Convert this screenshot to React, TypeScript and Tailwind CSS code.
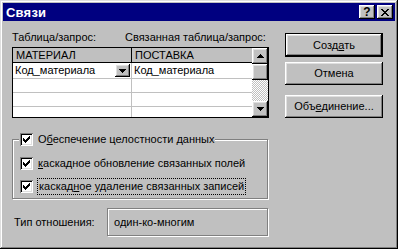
import React from "react";

const raised =
  "shadow-[inset_-1px_-1px_#000,inset_1px_1px_#fff,inset_-2px_-2px_#808080,inset_2px_2px_#dfdfdf]";
const sunken =
  "shadow-[inset_1px_1px_#808080,inset_-1px_-1px_#fff,inset_2px_2px_#000,inset_-2px_-2px_#dfdfdf]";
const etched = "border border-[#808080] shadow-[1px_1px_0_#fff,inset_1px_1px_0_#fff]";

function Arrow({ up }: { up?: boolean }) {
  return (
    <svg width="7" height="4" viewBox="0 0 7 4" shapeRendering="crispEdges" className={up ? "rotate-180" : ""}>
      <path d="M0 0h7v1h-7zM1 1h5v1h-5zM2 2h3v1h-3zM3 3h1v1h-1z" fill="#000" />
    </svg>
  );
}

function Check() {
  return (
    <span className={`flex h-[13px] w-[13px] shrink-0 items-center justify-center bg-white ${sunken}`}>
      <svg width="7" height="7" viewBox="0 0 7 7" shapeRendering="crispEdges">
        <path
          d="M6 0h1v1h-1zM5 1h2v1h-2zM0 2h1v1h-1zM4 2h3v1h-3zM0 3h2v1h-2zM3 3h3v1h-3zM0 4h5v1h-5zM1 5h3v1h-3zM2 6h1v1h-1z"
          fill="#000"
        />
      </svg>
    </span>
  );
}

function Button({ children, isDefault }: { children: React.ReactNode; isDefault?: boolean }) {
  const face = (
    <div className={`flex h-full w-full items-center justify-center bg-[#c0c0c0] ${raised}`}>{children}</div>
  );
  return isDefault ? <div className="h-[24px] border border-black">{face}</div> : <div className="h-[23px]">{face}</div>;
}

const rows = ["Код_материала", "", "", ""];

export default function App() {
  return (
    <div className="h-[249px] w-[398px] bg-[#c0c0c0] p-[3px] font-['Liberation_Sans',Arial,sans-serif] text-[11px] leading-[13px] text-black shadow-[inset_-1px_-1px_#000,inset_1px_1px_#dfdfdf,inset_-2px_-2px_#808080,inset_2px_2px_#fff]">
      {/* title bar */}
      <div className="flex h-[18px] items-center justify-between bg-[#000080] pl-[3px] pr-[2px]">
        <span className="text-[13px] font-bold tracking-[0.2px] text-white">Связи</span>
        <div className="flex gap-[2px]">
          <div className={`flex h-[14px] w-[16px] items-center justify-center bg-[#c0c0c0] ${raised}`}>
            <span className="text-[12px] leading-none font-bold">?</span>
          </div>
          <div className={`flex h-[14px] w-[16px] items-center justify-center bg-[#c0c0c0] ${raised}`}>
            <svg width="8" height="7" viewBox="0 0 8 7" shapeRendering="crispEdges">
              <path
                d="M0 0h2v1h-2zM6 0h2v1h-2zM1 1h2v1h-2zM5 1h2v1h-2zM2 2h4v1h-4zM3 3h2v1h-2zM2 4h4v1h-4zM1 5h2v1h-2zM5 5h2v1h-2zM0 6h2v1h-2zM6 6h2v1h-2z"
                fill="#000"
              />
            </svg>
          </div>
        </div>
      </div>

      <div className="pl-[9px]">
        <div className="flex">
          {/* tables */}
          <div className="mt-[10px] w-[257px]">
            <div className="flex h-[16px]">
              <span className="w-[113px]">Таблица/запрос:</span>
              <span>Связанная таблица/запрос:</span>
            </div>
            <div className="flex h-[71px] border border-black">
              <div className="flex flex-1 flex-col">
                <div className="flex h-[15px] border-b border-black bg-[#c0c0c0]">
                  <span className="w-[119px] border-r border-black pl-[3px] leading-[14px]">МАТЕРИАЛ</span>
                  <span className="flex-1 pl-[3px] leading-[14px]">ПОСТАВКА</span>
                </div>
                {rows.map((r, i) => (
                  <div
                    key={i}
                    className={`flex bg-white ${i === 0 ? "h-[16px]" : "h-[14px]"} ${i < 3 ? "border-b border-[#c0c0c0]" : "flex-1"}`}
                  >
                    <div className="flex w-[119px] items-center justify-between border-r border-[#c0c0c0] pl-[2px] pr-[1px]">
                      <span>{r}</span>
                      {i === 0 && (
                        <div className={`flex h-[13px] w-[15px] items-center justify-center bg-[#c0c0c0] ${raised}`}>
                          <Arrow />
                        </div>
                      )}
                    </div>
                    <div className="flex flex-1 items-center pl-[2px]">{r}</div>
                  </div>
                ))}
              </div>
              {/* scrollbar */}
              <div className="flex w-[16px] flex-col">
                <div className={`flex h-[16px] items-center justify-center bg-[#c0c0c0] ${raised}`}>
                  <Arrow up />
                </div>
                <div className={`h-[16px] bg-[#c0c0c0] ${raised}`} />
                <div className="flex-1 bg-[repeating-conic-gradient(#c0c0c0_0%_25%,#fff_0%_50%)] bg-[length:2px_2px]" />
                <div className={`flex h-[16px] items-center justify-center bg-[#c0c0c0] ${raised}`}>
                  <Arrow />
                </div>
              </div>
            </div>
          </div>

          {/* buttons */}
          <div className="ml-[16px] mt-[12px] flex w-[98px] flex-col">
            <Button isDefault>
              <span>
                Созд<span className="underline underline-offset-1">а</span>ть
              </span>
            </Button>
            <div className="mt-[5px]">
              <Button>Отмена</Button>
            </div>
            <div className="mt-[10px]">
              <Button>
                <span>
                  Объ<span className="underline underline-offset-1">е</span>динение...
                </span>
              </Button>
            </div>
          </div>
        </div>

        {/* group */}
        <div className={`relative mt-[21px] h-[60px] w-[256px] ${etched}`}>
          <div className="absolute -top-[7px] left-[6px] flex items-center gap-[5px] bg-[#c0c0c0] px-[1px]">
            <Check />
            <span>
              О<span className="underline underline-offset-1">б</span>еспечение целостности данных
            </span>
          </div>
          <div className="flex flex-col pt-[12px] pl-[7px]">
            <div className="flex h-[23px] items-center gap-[5px]">
              <Check />
              <span>
                <span className="underline underline-offset-1">к</span>аскадное обновление связанных полей
              </span>
            </div>
            <div className="flex h-[23px] items-center gap-[4px]">
              <Check />
              <span className="flex h-[17px] items-center border border-dotted border-black px-[1px]">
                <span>
                  каскад<span className="underline underline-offset-1">н</span>ое удаление связанных записей
                </span>
              </span>
            </div>
          </div>
        </div>

        {/* relation type */}
        <div className="mt-[9px] flex items-center">
          <span className="ml-[2px] w-[93px]">Тип отношения:</span>
          <div className={`flex h-[28px] w-[161px] items-center pl-[6px] ${etched}`}>один-ко-многим</div>
        </div>
      </div>
    </div>
  );
}
